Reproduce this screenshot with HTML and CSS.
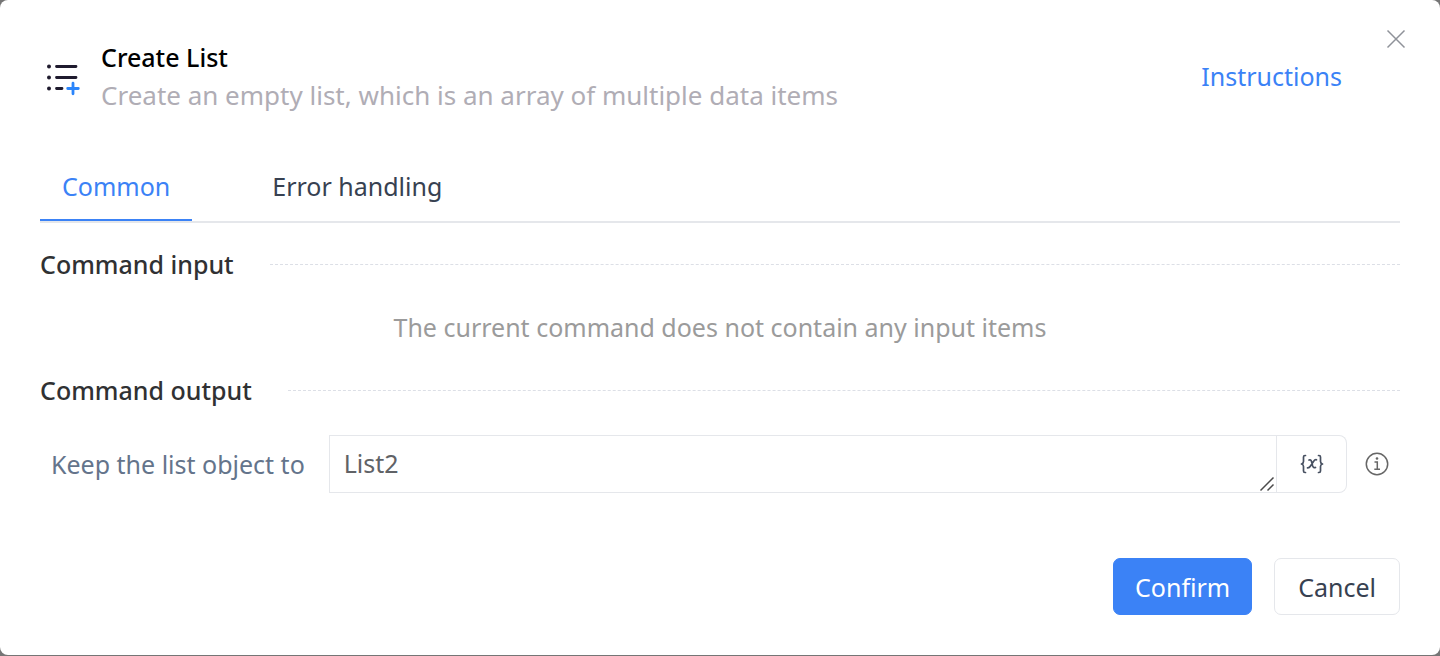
FILE: index.html
```html
<!DOCTYPE html>
<html lang="en">
<head>
<meta charset="utf-8">
<meta name="viewport" content="width=device-width, initial-scale=1">
<title>Create List</title>
<link rel="stylesheet" href="styles.css">
</head>
<body>
<main class="dialog" role="dialog" aria-labelledby="dialog-title">
  <header class="header">
    <svg class="list-icon" viewBox="0 0 36 40" aria-hidden="true">
      <g fill="#1f1b2e"><circle cx="4" cy="10.500" r="2"/><circle cx="4" cy="21.500" r="2"/><circle cx="4" cy="32.500" r="2"/></g>
      <g stroke="#1f1b2e" stroke-width="2.800" stroke-linecap="round"><path d="M11.500 10.500H31M11.500 21.500H31M11.500 32.500H17"/></g>
      <path d="M28 27.200V37.800M22.700 32.500H33.300" stroke="#2b85fb" stroke-width="2.800" stroke-linecap="round"/>
    </svg>
    <div class="heading">
      <h1 class="title" id="dialog-title">Create List</h1>
      <p class="subtitle">Create an empty list, which is an array of multiple data items</p>
    </div>
    <a class="instructions" href="#instructions">Instructions</a>
    <button class="close" type="button" aria-label="Close">
      <svg viewBox="0 0 20 20" class="close-icon" aria-hidden="true"><path d="M1.500 1.500L18.500 18.500M18.500 1.500L1.500 18.500" stroke="#8f9299" stroke-width="1.500" fill="none"/></svg>
    </button>
  </header>
  <nav class="tabs" role="tablist">
    <button class="tab tab-active" type="button" role="tab" aria-selected="true">Common</button>
    <button class="tab" type="button" role="tab" aria-selected="false">Error handling</button>
  </nav>
  <section class="section">
    <h2 class="section-title">Command input</h2>
    <p class="empty">The current command does not contain any input items</p>
  </section>
  <section class="section">
    <h2 class="section-title">Command output</h2>
    <div class="field">
      <label class="label" for="list-name">Keep the list object to</label>
      <div class="group">
        <textarea class="input" id="list-name" rows="1">List2</textarea>
        <svg class="grip" viewBox="0 0 16 16" aria-hidden="true"><path d="M1.500 14.500L14.500 1.500M8.500 14.500L14.500 8.500" stroke="#4b4b4b" stroke-width="1.500"/></svg>
        <button class="variable" type="button" aria-label="Insert variable">
          <svg class="variable-icon" viewBox="0 0 24 20" fill="none" stroke="#475061" stroke-width="1.700" stroke-linecap="round" stroke-linejoin="round" aria-hidden="true">
            <path d="M5.500 1.500H5Q3.500 1.500 3.500 3V7.500Q3.500 9.500 1.500 10Q3.500 10.500 3.500 12.500V17Q3.500 18.500 5 18.500H5.500M18.500 1.500H19Q20.500 1.500 20.500 3V7.500Q20.500 9.500 22.500 10Q20.500 10.500 20.500 12.500V17Q20.500 18.500 19 18.500H18.500"/>
            <path d="M9 6Q10.800 5.300 11.500 7.500L12.700 12Q13.500 14.300 15.500 13.500M16.500 5.800Q15 5.300 13.500 7.500L10.500 12Q9.300 14 7.500 13.800"/>
          </svg>
        </button>
      </div>
      <button class="info" type="button" aria-label="More information">
        <svg class="info-icon" viewBox="0 0 24 24" fill="none" stroke="#666" stroke-width="1.500" aria-hidden="true"><circle cx="12" cy="12" r="10.700"/><path d="M9.500 10H12.300V17M9.300 17.200H15"/><circle cx="12" cy="6.500" r="1.300" fill="#666" stroke="none"/></svg>
      </button>
    </div>
  </section>
  <footer class="footer">
    <button class="button primary" type="button">Confirm</button>
    <button class="button cancel" type="button">Cancel</button>
  </footer>
</main>
</body>
</html>
```
FILE: styles.css
```css
* { box-sizing: border-box; }
body {
  margin: 0;
  padding-bottom: 1px;
  background: #757575;
  font-family: "Noto Sans", "Open Sans", sans-serif;
  font-size: 25px;
  line-height: 38px;
  color: #374151;
}
h1, h2, p { margin: 0; font-size: inherit; }
button { font: inherit; color: inherit; cursor: pointer; }
svg { display: block; }
.dialog {
  position: relative;
  padding: 38px 40px 40px;
  background: #fff;
  border-radius: 8px;
}
.header { display: flex; align-items: center; gap: 20px; padding: 0 58px 0 5px; }
.list-icon { width: 36px; height: 40px; flex: none; }
.heading { flex: 1; }
.title { font-weight: 500; color: #000; }
.subtitle { font-size: 26px; color: #b0adb5; }
.instructions { color: #3b82f6; text-decoration: none; }
.close {
  position: absolute;
  top: 23px;
  right: 28px;
  padding: 6px;
  border: 0;
  background: none;
}
.close-icon { width: 20px; height: 20px; }
.tabs { display: flex; gap: 58px; margin-top: 40px; border-bottom: 2px solid #e5e7eb; }
.tab {
  padding: 13px 22px 14px;
  border: 0;
  border-bottom: 2px solid transparent;
  background: none;
}
.tab-active { color: #3b82f6; border-color: #3b82f6; }
.section { margin-top: 22px; }
.section-title {
  display: flex;
  align-items: center;
  gap: 36px;
  font-weight: 500;
  color: #303133;
}
.section-title::after { content: ""; flex: 1; border-top: 1px dashed #dcdfe6; }
.empty { margin-top: 25px; text-align: center; color: #9b9b9b; }
.section + .section { margin-top: 25px; }
.field { display: flex; align-items: center; margin-top: 26px; padding: 0 11px; }
.label { margin-right: 24px; color: #64748b; }
.group { position: relative; display: flex; flex: 1; }
.input {
  display: block;
  flex: 1;
  min-width: 0;
  height: 58px;
  padding: 8px 14px;
  border: 1px solid #e5e7eb;
  border-radius: 0;
  background: #fff;
  font: inherit;
  color: #606266;
  resize: none;
  overflow: hidden;
}
.grip { position: absolute; right: 72px; bottom: 1px; width: 16px; height: 16px; }
.variable {
  display: grid;
  place-items: center;
  width: 70px;
  padding: 0;
  border: 1px solid #e5e7eb;
  border-left: 0;
  border-radius: 0 8px 8px 0;
  background: #fff;
}
.variable-icon { width: 24px; height: 20px; }
.info { margin-left: 18px; padding: 0; border: 0; background: none; }
.info-icon { width: 24px; height: 24px; }
.footer { display: flex; justify-content: flex-end; gap: 22px; margin-top: 65px; }
.button {
  padding: 9px 21px 8px;
  border: 1px solid #e5e7eb;
  border-radius: 7px;
  background: #fff;
}
.primary { border-color: #3b82f6; background: #3b82f6; color: #fff; }
.cancel { padding-left: 23px; padding-right: 23px; }
```
